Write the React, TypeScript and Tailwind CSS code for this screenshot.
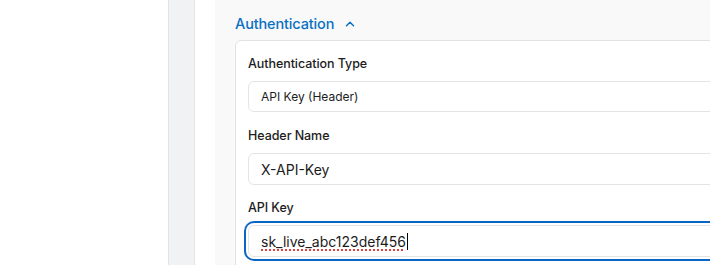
import { ChevronUp } from "lucide-react";

const font = { fontFamily: "Inter, 'Liberation Sans', sans-serif" };

function Label({ children }: { children: React.ReactNode }) {
  return (
    <div className="h-[18px] text-[12.5px] leading-[18px] font-medium tracking-[-0.005em] text-[#1c1c1c]">
      {children}
    </div>
  );
}

export default function App() {
  return (
    <div className="flex h-[265px] w-[710px] overflow-hidden bg-white" style={font}>
      <div className="w-[169px] shrink-0 border-r border-[#e3e4e8] bg-white" />
      <div className="w-[26px] shrink-0 border-r border-[#e3e4e8] bg-[#f1f2f4]" />
      <div className="w-[20px] shrink-0 bg-white" />
      <div className="flex-1 bg-[#f9f9f9] pl-[20px] pt-[14px]">
        <div className="flex h-5 items-center gap-[9px] text-[14.5px] font-medium tracking-[-0.01em] text-[#0a70c2]">
          <span>Authentication</span>
          <ChevronUp className="h-[14px] w-[14px]" strokeWidth={2.5} />
        </div>
        <div className="mt-[6px] -mr-6 h-[260px] rounded-md border border-[#e2e2e2] bg-white pl-[12px] pt-[14px]">
          <Label>Authentication Type</Label>
          <div className="mt-[8px] flex h-[31px] items-center rounded-md border border-[#e4e4e4] bg-white pl-[12px] text-[12px] text-[#1c1c1c]">
            API Key (Header)
          </div>
          <div className="mt-[15px]">
            <Label>Header Name</Label>
          </div>
          <div className="mt-[8px] flex h-[32px] items-center rounded-md border border-[#e4e4e4] bg-white pl-[12px] text-[14px] text-[#1c1c1c]">
            X-API-Key
          </div>
          <div className="mt-[14px]">
            <Label>API Key</Label>
          </div>
          <div className="mt-[8px] flex h-[32px] items-center rounded-md border border-[#e4e4e4] bg-white pl-[12px] text-[14px] text-[#1c1c1c] ring-2 ring-[#0a66c2] ring-offset-2 ring-offset-white">
            <span className="underline decoration-[#e0433a] decoration-dotted decoration-[1.5px] underline-offset-[3px]">
              sk_live_abc123def456
            </span>
            <span className="ml-[1px] inline-block h-[17px] w-[1px] bg-black" />
          </div>
        </div>
      </div>
    </div>
  );
}
